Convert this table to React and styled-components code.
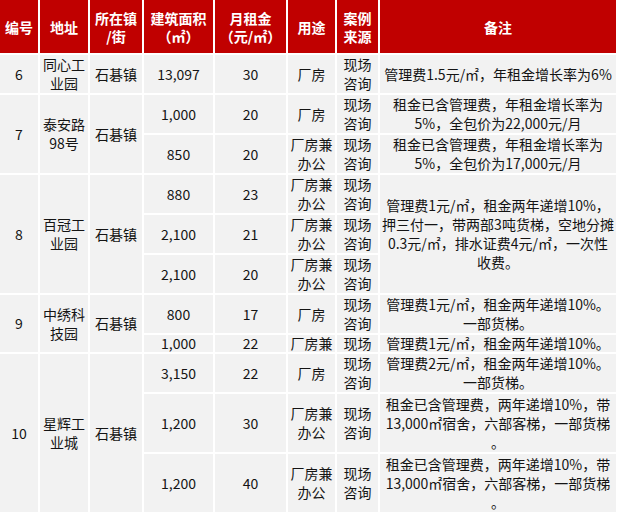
import React from "react";
import styled, { createGlobalStyle } from "styled-components";

const GlobalStyle = createGlobalStyle`
  html, body {
    margin: 0;
    padding: 0;
    background: #ffffff;
  }
  body {
    font-family: "Noto Sans CJK SC", "Noto Sans", sans-serif;
  }
`;

const Grid = styled.div`
  display: grid;
  width: 616px;
  grid-template-columns: 38px 48px 52px 69px 71px 47px 41px 236px;
  grid-template-rows: 53px repeat(7, 38px) 17px 38px 58px 58px;
  gap: 2px;
  background: #ffffff;
`;

const Cell = styled.div`
  grid-row: ${(p) => p.$r} / span ${(p) => p.$rs || 1};
  grid-column: ${(p) => p.$c};
  display: flex;
  flex-direction: column;
  align-items: center;
  justify-content: center;
  overflow: hidden;
  text-align: center;
  background: ${(p) => (p.$head ? "#c00000" : "#f2f2f2")};
  color: ${(p) => (p.$head ? "#ffffff" : "#141414")};
  font-weight: ${(p) => (p.$head ? 700 : 400)};
  font-size: 14px;
  line-height: ${(p) => (p.$head ? "18px" : p.$tight ? "17px" : "19px")};
`;

const Line = styled.span`
  display: block;
  white-space: nowrap;
`;

const Text = ({ lines }) =>
  [].concat(lines).map((l, i) => <Line key={i}>{l}</Line>);

const head = [
  "编号",
  "地址",
  ["所在镇", "/街"],
  ["建筑面积", "（㎡）"],
  ["月租金", "（元/㎡）"],
  "用途",
  ["案例", "来源"],
  "备注",
];

// groups: number, address, first grid row, rows spanned
const groups = [
  { no: "6", addr: ["同心工", "业园"], r: 2, rs: 1 },
  { no: "7", addr: ["泰安路", "98号"], r: 3, rs: 2 },
  { no: "8", addr: ["百冠工", "业园"], r: 5, rs: 3 },
  { no: "9", addr: ["中绣科", "技园"], r: 8, rs: 2 },
  { no: "10", addr: ["星辉工", "业城"], r: 10, rs: 3 },
];

const both = ["现场", "咨询"];

const rows = [
  { area: "13,097", rent: "30", use: ["厂房"], src: both },
  { area: "1,000", rent: "20", use: ["厂房"], src: both },
  { area: "850", rent: "20", use: ["厂房兼", "办公"], src: both },
  { area: "880", rent: "23", use: ["厂房兼", "办公"], src: both },
  { area: "2,100", rent: "21", use: ["厂房兼", "办公"], src: both },
  { area: "2,100", rent: "20", use: ["厂房兼", "办公"], src: both },
  { area: "800", rent: "17", use: ["厂房"], src: both },
  { area: "1,000", rent: "22", use: ["厂房兼"], src: ["现场"], tight: true },
  { area: "3,150", rent: "22", use: ["厂房"], src: both },
  { area: "1,200", rent: "30", use: ["厂房兼", "办公"], src: both },
  { area: "1,200", rent: "40", use: ["厂房兼", "办公"], src: both },
];

const notes = [
  { r: 2, rs: 1, lines: ["管理费1.5元/㎡，年租金增长率为6%"] },
  { r: 3, rs: 1, lines: ["租金已含管理费，年租金增长率为", "5%，全包价为22,000元/月"] },
  { r: 4, rs: 1, lines: ["租金已含管理费，年租金增长率为", "5%，全包价为17,000元/月"] },
  {
    r: 5,
    rs: 3,
    lines: [
      "管理费1元/㎡，租金两年递增10%，",
      "押三付一，带两部3吨货梯，空地分摊",
      "0.3元/㎡，排水证费4元/㎡，一次性",
      "收费。",
    ],
  },
  { r: 8, rs: 1, lines: ["管理费1元/㎡，租金两年递增10%。", "一部货梯。"] },
  { r: 9, rs: 1, tight: true, lines: ["管理费1元/㎡，租金两年递增10%。"] },
  { r: 10, rs: 1, lines: ["管理费2元/㎡，租金两年递增10%。", "一部货梯。"] },
  { r: 11, rs: 1, lines: ["租金已含管理费，两年递增10%，带", "13,000㎡宿舍，六部客梯，一部货梯", "。"] },
  { r: 12, rs: 1, lines: ["租金已含管理费，两年递增10%，带", "13,000㎡宿舍，六部客梯，一部货梯", "。"] },
];

export default function App() {
  return (
    <>
      <GlobalStyle />
      <Grid>
        {head.map((h, i) => (
          <Cell key={"h" + i} $head $r={1} $c={i + 1}>
            <Text lines={h} />
          </Cell>
        ))}
        {groups.map((g) => (
          <React.Fragment key={g.no}>
            <Cell $r={g.r} $rs={g.rs} $c={1}>
              <Text lines={g.no} />
            </Cell>
            <Cell $r={g.r} $rs={g.rs} $c={2}>
              <Text lines={g.addr} />
            </Cell>
            <Cell $r={g.r} $rs={g.rs} $c={3}>
              <Text lines="石碁镇" />
            </Cell>
          </React.Fragment>
        ))}
        {rows.map((row, i) => (
          <React.Fragment key={"r" + i}>
            <Cell $r={i + 2} $c={4} $tight={row.tight}>
              <Text lines={row.area} />
            </Cell>
            <Cell $r={i + 2} $c={5} $tight={row.tight}>
              <Text lines={row.rent} />
            </Cell>
            <Cell $r={i + 2} $c={6} $tight={row.tight}>
              <Text lines={row.use} />
            </Cell>
            <Cell $r={i + 2} $c={7} $tight={row.tight}>
              <Text lines={row.src} />
            </Cell>
          </React.Fragment>
        ))}
        {notes.map((n) => (
          <Cell key={"n" + n.r} $r={n.r} $rs={n.rs} $c={8} $tight={n.tight}>
            <Text lines={n.lines} />
          </Cell>
        ))}
      </Grid>
    </>
  );
}
